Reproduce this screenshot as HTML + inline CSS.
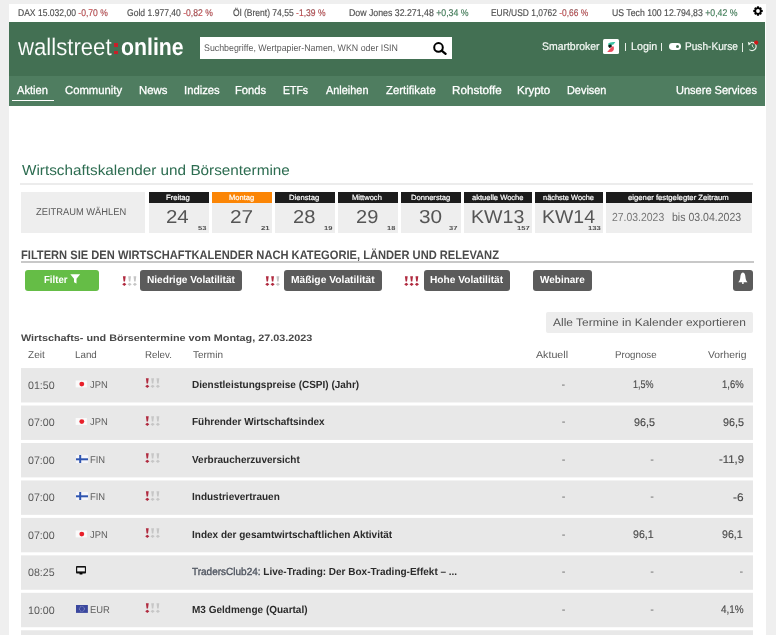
<!DOCTYPE html>
<html><head><meta charset="utf-8">
<style>
*{margin:0;padding:0;box-sizing:border-box}
html,body{width:776px;height:635px;overflow:hidden;background:#efefef;font-family:"Liberation Sans",sans-serif;text-rendering:geometricPrecision}
.a{position:absolute;white-space:nowrap;line-height:1;transform-origin:0 0}
.b{position:absolute}
.neg{color:#d0454a}.pos{color:#3d8c5c}
.box{position:absolute;background:#eeeeee;top:192px;height:40.7px}
.dhb{position:absolute;top:192px;height:10.7px;background:#1c1c1c}
.btn{position:absolute;top:270px;height:20.8px;background:#5b5b5b;border-radius:3px}
.row{position:absolute;left:21px;width:732px;height:34.6px;background:#e8e8e8}
.v{width:100px;text-align:right;font-size:11px;color:#484848;font-weight:bold}
.pipe{position:absolute;width:1px;background:#e8f0e8}
</style></head><body><div style="position:absolute;left:0;top:0;width:776px;height:635px;filter:blur(0.3px)">
<div class="b" style="left:9px;top:4px;width:757px;height:640px;background:#fff"></div>
<!-- gear -->
<svg class="b" style="left:752.9px;top:6.2px" width="10" height="10" viewBox="0 0 10 10"><g fill="#000"><circle cx="5" cy="5" r="3.4"/><rect x="3.8" y="0.2" width="2.4" height="9.6" rx="0.9"/><rect x="0.2" y="3.8" width="9.6" height="2.4" rx="0.9"/><rect x="3.8" y="0.4" width="2.4" height="9.2" rx="0.9" transform="rotate(45 5 5)"/><rect x="0.4" y="3.8" width="9.2" height="2.4" rx="0.9" transform="rotate(45 5 5)"/></g><circle cx="5" cy="5" r="1.9" fill="#fff"/></svg>
<!-- header -->
<div class="b" style="left:9px;top:22px;width:756px;height:54px;background:#437053"></div>
<div class="b" style="left:113.9px;top:43px;width:4.6px;height:3.6px;background:#c8202a"></div>
<div class="b" style="left:113.9px;top:50.6px;width:4.6px;height:3.7px;background:#c8202a"></div>
<div class="b" style="left:200px;top:37px;width:252px;height:21.8px;background:#fff"></div>
<svg class="b" style="left:433px;top:41.5px" width="14" height="13" viewBox="0 0 14 13"><circle cx="5.5" cy="5.4" r="4.3" fill="none" stroke="#000" stroke-width="2"/><line x1="8.6" y1="8.6" x2="12.6" y2="11.8" stroke="#000" stroke-width="2.3" stroke-linecap="round"/></svg>
<div class="b" style="left:603.3px;top:39px;width:15.6px;height:15.4px;background:#fff;border-radius:1.5px"></div>
<svg class="b" style="left:603.3px;top:38.9px" width="16" height="16" viewBox="0 0 16 16"><path d="M5.2 4.4 Q7 2.5 12.4 3.0 L10.2 5.7 Q7.5 5.5 5.3 6.4 Z" fill="#3cc4a4"/><path d="M5.4 6.0 Q4.7 7.9 6.6 9.1 L8.7 8.1 Q9.1 6.5 8.3 5.5 Q6.6 5.3 5.4 6.0 Z" fill="#0c1a14"/><path d="M8.4 8.3 L10.2 7.0 Q11.5 8.5 10.7 10.9 Q9.3 13.7 4.2 12.9 Q6.5 10.5 8.4 8.3 Z" fill="#ec4c5c"/></svg>
<div class="pipe" style="left:625px;top:43px;height:8px"></div>
<div class="pipe" style="left:660.5px;top:43px;height:8px"></div>
<div class="b" style="left:669.2px;top:43.2px;width:12.1px;height:6.7px;background:#fff;border-radius:3.4px"></div>
<div class="b" style="left:675.5px;top:44.8px;width:3.6px;height:3.6px;background:#437053;border-radius:50%"></div>
<div class="pipe" style="left:742px;top:43px;height:9px"></div>
<svg class="b" style="left:744px;top:36px" width="18" height="18" viewBox="0 0 18 18"><path d="M8.3 6.4 A4.1 4.1 0 1 1 5.4 13.6" fill="none" stroke="#e8f4ea" stroke-width="1.2"/><path d="M8.3 6.4 H6.6" stroke="#e8f4ea" stroke-width="1.2"/><path d="M3.8 5.8 L7.2 7.6 L4.6 9.6 Z" fill="#eef8ee"/><path d="M8.2 8.6 L8.5 10.6 L9.8 11.6" fill="none" stroke="#d8ecd8" stroke-width="1"/><circle cx="12.2" cy="6.6" r="2.1" fill="#d01818"/></svg>
<!-- nav -->
<div class="b" style="left:9px;top:76px;width:756px;height:29.6px;background:#4f7d60"></div>
<div class="b" style="left:12px;top:99.8px;width:42px;height:1.5px;background:#fff"></div>
<!-- title -->
<div class="b" style="left:20px;top:182.8px;width:733px;height:2px;background:#ececec"></div>
<div class="box" style="left:20.8px;width:124px"></div>
<div class="box" style="left:148.8px;width:60px"></div><div class="dhb" style="left:148.8px;width:60px"></div>
<div class="box" style="left:211.8px;width:60px"></div><div class="dhb" style="left:211.8px;width:60px;background:#fb8505"></div>
<div class="box" style="left:274.8px;width:60px"></div><div class="dhb" style="left:274.8px;width:60px"></div>
<div class="box" style="left:337.8px;width:60px"></div><div class="dhb" style="left:337.8px;width:60px"></div>
<div class="box" style="left:400.8px;width:60px"></div><div class="dhb" style="left:400.8px;width:60px"></div>
<div class="box" style="left:463.9px;width:68px"></div><div class="dhb" style="left:463.9px;width:68px"></div>
<div class="box" style="left:535.2px;width:68px"></div><div class="dhb" style="left:535.2px;width:68px"></div>
<div class="box" style="left:606.3px;width:145.8px"></div><div class="dhb" style="left:606.3px;width:145.8px"></div>
<!-- filter -->
<div class="b" style="left:21px;top:261px;width:732.5px;height:2px;background:#c8c8c8"></div>
<div class="btn" style="left:25px;width:73.7px;background:#65bd46"></div>
<svg class="b" style="left:70px;top:273.5px" width="11" height="10" viewBox="0 0 11 10"><path d="M0.3 0.3 H10.2 L6.5 4.8 V9.6 L4 8.3 V4.8 Z" fill="#fff"/></svg>
<div class="btn" style="left:140.2px;width:102px"></div>
<div class="btn" style="left:284px;width:97.7px"></div>
<div class="btn" style="left:423.5px;width:86.5px"></div>
<div class="btn" style="left:533.2px;width:58.6px"></div>
<div class="btn" style="left:733.2px;width:20.2px"></div>
<svg class="b" style="left:737px;top:271px" width="13" height="14" viewBox="0 0 13 14"><path d="M5.9 1.4 C7.9 1.7 8.3 4 8.5 6.5 C8.7 8.8 9.4 10 10.5 11.2 H1.3 C2.4 10 3.1 8.8 3.3 6.5 C3.5 4 3.9 1.7 5.9 1.4 Z" fill="#fff"/><circle cx="5.9" cy="12" r="1" fill="#fff"/></svg>
<svg class="b" style="left:122.1px;top:275.9px" width="15" height="10" viewBox="0 0 15 10"><path d="M0.9 0.2 H3.7 L3.0 5.6 H1.6 Z M0.2 8.3 L2.3 6.7 L4.4 8.3 L2.3 9.9 Z" fill="#b02a3f"/><path d="M6.2 0.2 H9.0 L8.3 5.6 H6.9 Z M5.5 8.3 L7.6 6.7 L9.7 8.3 L7.6 9.9 Z" fill="#c6c6c6"/><path d="M11.5 0.2 H14.3 L13.6 5.6 H12.2 Z M10.8 8.3 L12.9 6.7 L15.0 8.3 L12.9 9.9 Z" fill="#c6c6c6"/></svg><svg class="b" style="left:264.5px;top:275.9px" width="15" height="10" viewBox="0 0 15 10"><path d="M0.9 0.2 H3.7 L3.0 5.6 H1.6 Z M0.2 8.3 L2.3 6.7 L4.4 8.3 L2.3 9.9 Z" fill="#b02a3f"/><path d="M6.2 0.2 H9.0 L8.3 5.6 H6.9 Z M5.5 8.3 L7.6 6.7 L9.7 8.3 L7.6 9.9 Z" fill="#b02a3f"/><path d="M11.5 0.2 H14.3 L13.6 5.6 H12.2 Z M10.8 8.3 L12.9 6.7 L15.0 8.3 L12.9 9.9 Z" fill="#c6c6c6"/></svg><svg class="b" style="left:404px;top:275.9px" width="15" height="10" viewBox="0 0 15 10"><path d="M0.9 0.2 H3.7 L3.0 5.6 H1.6 Z M0.2 8.3 L2.3 6.7 L4.4 8.3 L2.3 9.9 Z" fill="#b02a3f"/><path d="M6.2 0.2 H9.0 L8.3 5.6 H6.9 Z M5.5 8.3 L7.6 6.7 L9.7 8.3 L7.6 9.9 Z" fill="#b02a3f"/><path d="M11.5 0.2 H14.3 L13.6 5.6 H12.2 Z M10.8 8.3 L12.9 6.7 L15.0 8.3 L12.9 9.9 Z" fill="#b02a3f"/></svg>
<!-- table -->
<div class="b" style="left:546.2px;top:312.2px;width:207px;height:20.8px;background:#ededed;border-radius:2px"></div>
<svg class="b" style="left:0;top:360px" width="776" height="275" viewBox="0 360 776 275"><rect x="21" y="368.06" width="732" height="34.4" fill="#e8e8e8"/><rect x="21" y="405.52" width="732" height="34.4" fill="#e8e8e8"/><rect x="21" y="442.98" width="732" height="34.4" fill="#e8e8e8"/><rect x="21" y="480.44" width="732" height="34.4" fill="#e8e8e8"/><rect x="21" y="517.90" width="732" height="34.4" fill="#e8e8e8"/><rect x="21" y="555.36" width="732" height="34.4" fill="#e8e8e8"/><rect x="21" y="592.82" width="732" height="34.4" fill="#e8e8e8"/><rect x="21" y="630.28" width="732" height="34.4" fill="#e8e8e8"/></svg>
<svg class="b" style="left:75px;top:380px" width="13" height="9" viewBox="0 0 13 9"><rect x="0.7" y="0.50" width="11.2" height="6.9" fill="#fafafa"/><circle cx="6.8" cy="4.10" r="2.45" fill="#e8202a"/></svg><svg class="b" style="left:75px;top:417px" width="13" height="9" viewBox="0 0 13 9"><rect x="0.7" y="1.00" width="11.2" height="6.9" fill="#fafafa"/><circle cx="6.8" cy="4.60" r="2.45" fill="#e8202a"/></svg><svg class="b" style="left:75.7px;top:454.8px" width="12.2" height="8.2" viewBox="0 0 12.2 8.2"><rect width="12.2" height="8.2" fill="#f6f6fa"/><rect x="3.2" y="0" width="2" height="8.2" fill="#2f55b0"/><rect x="0" y="3.3" width="12.2" height="2" fill="#2f55b0"/></svg><svg class="b" style="left:75.7px;top:492.3px" width="12.2" height="8.2" viewBox="0 0 12.2 8.2"><rect width="12.2" height="8.2" fill="#f6f6fa"/><rect x="3.2" y="0" width="2" height="8.2" fill="#2f55b0"/><rect x="0" y="3.3" width="12.2" height="2" fill="#2f55b0"/></svg><svg class="b" style="left:75px;top:530px" width="13" height="9" viewBox="0 0 13 9"><rect x="0.7" y="0.50" width="11.2" height="6.9" fill="#fafafa"/><circle cx="6.8" cy="4.10" r="2.45" fill="#e8202a"/></svg><svg class="b" style="left:75.8px;top:566.2px" width="10.2" height="8.6" viewBox="0 0 10.2 8.6"><rect x="0" y="0" width="10.1" height="7.4" rx="0.9" fill="#111"/><rect x="1.2" y="1.6" width="7.7" height="3.8" fill="#f0f0f0"/><rect x="3.5" y="6.8" width="3" height="1.8" rx="0.6" fill="#000"/></svg><svg class="b" style="left:76px;top:605px" width="11.9" height="7.9" viewBox="0 0 11.9 7.9"><rect width="11.9" height="7.9" fill="#3a479e"/><circle cx="5.9" cy="3.9" r="2.5" fill="none" stroke="#a6acd8" stroke-width="0.8" stroke-dasharray="0.9 0.7"/></svg>
<svg class="b" style="left:144.5px;top:378px" width="15" height="10" viewBox="0 0 15 10"><path d="M0.9 0.2 H3.7 L3.0 5.6 H1.6 Z M0.2 8.3 L2.3 6.7 L4.4 8.3 L2.3 9.9 Z" fill="#b02a3f"/><path d="M6.2 0.2 H9.0 L8.3 5.6 H6.9 Z M5.5 8.3 L7.6 6.7 L9.7 8.3 L7.6 9.9 Z" fill="#c6c6c6"/><path d="M11.5 0.2 H14.3 L13.6 5.6 H12.2 Z M10.8 8.3 L12.9 6.7 L15.0 8.3 L12.9 9.9 Z" fill="#c6c6c6"/></svg><svg class="b" style="left:144.5px;top:415.5px" width="15" height="10" viewBox="0 0 15 10"><path d="M0.9 0.2 H3.7 L3.0 5.6 H1.6 Z M0.2 8.3 L2.3 6.7 L4.4 8.3 L2.3 9.9 Z" fill="#b02a3f"/><path d="M6.2 0.2 H9.0 L8.3 5.6 H6.9 Z M5.5 8.3 L7.6 6.7 L9.7 8.3 L7.6 9.9 Z" fill="#c6c6c6"/><path d="M11.5 0.2 H14.3 L13.6 5.6 H12.2 Z M10.8 8.3 L12.9 6.7 L15.0 8.3 L12.9 9.9 Z" fill="#c6c6c6"/></svg><svg class="b" style="left:144.5px;top:453px" width="15" height="10" viewBox="0 0 15 10"><path d="M0.9 0.2 H3.7 L3.0 5.6 H1.6 Z M0.2 8.3 L2.3 6.7 L4.4 8.3 L2.3 9.9 Z" fill="#b02a3f"/><path d="M6.2 0.2 H9.0 L8.3 5.6 H6.9 Z M5.5 8.3 L7.6 6.7 L9.7 8.3 L7.6 9.9 Z" fill="#c6c6c6"/><path d="M11.5 0.2 H14.3 L13.6 5.6 H12.2 Z M10.8 8.3 L12.9 6.7 L15.0 8.3 L12.9 9.9 Z" fill="#c6c6c6"/></svg><svg class="b" style="left:144.5px;top:490.5px" width="15" height="10" viewBox="0 0 15 10"><path d="M0.9 0.2 H3.7 L3.0 5.6 H1.6 Z M0.2 8.3 L2.3 6.7 L4.4 8.3 L2.3 9.9 Z" fill="#b02a3f"/><path d="M6.2 0.2 H9.0 L8.3 5.6 H6.9 Z M5.5 8.3 L7.6 6.7 L9.7 8.3 L7.6 9.9 Z" fill="#c6c6c6"/><path d="M11.5 0.2 H14.3 L13.6 5.6 H12.2 Z M10.8 8.3 L12.9 6.7 L15.0 8.3 L12.9 9.9 Z" fill="#c6c6c6"/></svg><svg class="b" style="left:144.5px;top:528px" width="15" height="10" viewBox="0 0 15 10"><path d="M0.9 0.2 H3.7 L3.0 5.6 H1.6 Z M0.2 8.3 L2.3 6.7 L4.4 8.3 L2.3 9.9 Z" fill="#b02a3f"/><path d="M6.2 0.2 H9.0 L8.3 5.6 H6.9 Z M5.5 8.3 L7.6 6.7 L9.7 8.3 L7.6 9.9 Z" fill="#c6c6c6"/><path d="M11.5 0.2 H14.3 L13.6 5.6 H12.2 Z M10.8 8.3 L12.9 6.7 L15.0 8.3 L12.9 9.9 Z" fill="#c6c6c6"/></svg><svg class="b" style="left:144.5px;top:603px" width="15" height="10" viewBox="0 0 15 10"><path d="M0.9 0.2 H3.7 L3.0 5.6 H1.6 Z M0.2 8.3 L2.3 6.7 L4.4 8.3 L2.3 9.9 Z" fill="#b02a3f"/><path d="M6.2 0.2 H9.0 L8.3 5.6 H6.9 Z M5.5 8.3 L7.6 6.7 L9.7 8.3 L7.6 9.9 Z" fill="#c6c6c6"/><path d="M11.5 0.2 H14.3 L13.6 5.6 H12.2 Z M10.8 8.3 L12.9 6.7 L15.0 8.3 L12.9 9.9 Z" fill="#c6c6c6"/></svg>
<div class="a" id="tk1" style="left:17.60px;top:9.20px;font-size:9.8px;transform:scaleX(0.8718);color:#4e4e4e;-webkit-text-stroke:0.15px #4e4e4e;">DAX 15.032,00 <span class="neg">-0,70 %</span></div>
<div class="a" id="tk2" style="left:126.89px;top:9.20px;font-size:9.8px;transform:scaleX(0.8746);color:#4e4e4e;-webkit-text-stroke:0.15px #4e4e4e;">Gold 1.977,40 <span class="neg">-0,82 %</span></div>
<div class="a" id="tk3" style="left:232.80px;top:9.20px;font-size:9.8px;transform:scaleX(0.8708);color:#4e4e4e;-webkit-text-stroke:0.15px #4e4e4e;">Öl (Brent) 74,55 <span class="neg">-1,39 %</span></div>
<div class="a" id="tk4" style="left:348.62px;top:9.20px;font-size:9.8px;transform:scaleX(0.8943);color:#4e4e4e;-webkit-text-stroke:0.15px #4e4e4e;">Dow Jones 32.271,48 <span class="pos">+0,34 %</span></div>
<div class="a" id="tk5" style="left:491.45px;top:9.20px;font-size:9.8px;transform:scaleX(0.8588);color:#4e4e4e;-webkit-text-stroke:0.15px #4e4e4e;">EUR/USD 1,0762 <span class="neg">-0,66 %</span></div>
<div class="a" id="tk6" style="left:612.41px;top:9.20px;font-size:9.8px;transform:scaleX(0.8883);color:#4e4e4e;-webkit-text-stroke:0.15px #4e4e4e;">US Tech 100 12.794,83 <span class="pos">+0,42 %</span></div>
<div class="a" id="lg1" style="left:18.15px;top:35.50px;font-size:24px;transform:scaleX(0.9228);color:#fff;-webkit-text-stroke:0.1px #437053;">wallstreet</div>
<div class="a" id="lg2" style="left:121.10px;top:35.50px;font-size:24px;transform:scaleX(0.8862);color:#fff;font-weight:bold;">online</div>
<div class="a" id="srch" style="left:203.52px;top:44.31px;font-size:9.5px;transform:scaleX(0.9291);color:#5a5a5a;">Suchbegriffe, Wertpapier-Namen, WKN oder ISIN</div>
<div class="a" id="sb" style="left:541.58px;top:41.77px;font-size:11px;transform:scaleX(0.9498);color:#f4f8f4;-webkit-text-stroke:0.2px #f4f8f4;">Smartbroker</div>
<div class="a" id="lgn" style="left:630.60px;top:41.77px;font-size:11px;transform:scaleX(0.9759);color:#f4f8f4;-webkit-text-stroke:0.2px #f4f8f4;">Login</div>
<div class="a" id="psh" style="left:684.88px;top:41.77px;font-size:11px;transform:scaleX(0.9195);color:#f4f8f4;-webkit-text-stroke:0.2px #f4f8f4;">Push-Kurse</div>
<div class="a" id="nv0" style="left:17.41px;top:85.34px;font-size:11.6px;transform:scaleX(0.9567);color:#fff;-webkit-text-stroke:0.3px #fff;">Aktien</div>
<div class="a" id="nv1" style="left:65.29px;top:85.34px;font-size:11.6px;transform:scaleX(0.9750);color:#fff;-webkit-text-stroke:0.3px #fff;">Community</div>
<div class="a" id="nv2" style="left:138.60px;top:85.34px;font-size:11.6px;transform:scaleX(0.9781);color:#fff;-webkit-text-stroke:0.3px #fff;">News</div>
<div class="a" id="nv3" style="left:183.63px;top:85.34px;font-size:11.6px;transform:scaleX(0.9722);color:#fff;-webkit-text-stroke:0.3px #fff;">Indizes</div>
<div class="a" id="nv4" style="left:235.33px;top:85.34px;font-size:11.6px;transform:scaleX(0.9655);color:#fff;-webkit-text-stroke:0.3px #fff;">Fonds</div>
<div class="a" id="nv5" style="left:282.94px;top:85.34px;font-size:11.6px;transform:scaleX(0.9075);color:#fff;-webkit-text-stroke:0.3px #fff;">ETFs</div>
<div class="a" id="nv6" style="left:326.33px;top:85.34px;font-size:11.6px;transform:scaleX(0.9418);color:#fff;-webkit-text-stroke:0.3px #fff;">Anleihen</div>
<div class="a" id="nv7" style="left:385.93px;top:85.34px;font-size:11.6px;transform:scaleX(0.9778);color:#fff;-webkit-text-stroke:0.3px #fff;">Zertifikate</div>
<div class="a" id="nv8" style="left:451.67px;top:85.34px;font-size:11.6px;transform:scaleX(1.0051);color:#fff;-webkit-text-stroke:0.3px #fff;">Rohstoffe</div>
<div class="a" id="nv9" style="left:517.23px;top:85.34px;font-size:11.6px;transform:scaleX(0.9884);color:#fff;-webkit-text-stroke:0.3px #fff;">Krypto</div>
<div class="a" id="nv10" style="left:566.69px;top:85.34px;font-size:11.6px;transform:scaleX(0.9402);color:#fff;-webkit-text-stroke:0.3px #fff;">Devisen</div>
<div class="a" id="nv11" style="left:676.29px;top:85.34px;font-size:11.6px;transform:scaleX(0.9514);color:#fff;-webkit-text-stroke:0.3px #fff;">Unsere Services</div>
<div class="a" id="ttl" style="left:21.51px;top:163.92px;font-size:14.4px;transform:scaleX(1.0632);color:#2c6c50;">Wirtschaftskalender und Börsentermine</div>
<div class="a" id="zw" style="left:36.29px;top:207.83px;font-size:9.8px;transform:scaleX(0.9525);color:#5a5a5a;">ZEITRAUM WÄHLEN</div>
<div class="a" id="dh0" style="left:166.21px;top:193.54px;font-size:7.5px;transform:scaleX(1.0211);color:#fff;-webkit-text-stroke:0.2px #fff;">Freitag</div>
<div class="a" id="dh1" style="left:228.75px;top:193.54px;font-size:7.5px;transform:scaleX(1.0037);color:#fff;-webkit-text-stroke:0.2px #fff;">Montag</div>
<div class="a" id="dh2" style="left:289.14px;top:193.54px;font-size:7.5px;transform:scaleX(1.0176);color:#fff;-webkit-text-stroke:0.2px #fff;">Dienstag</div>
<div class="a" id="dh3" style="left:352.24px;top:193.54px;font-size:7.5px;transform:scaleX(1.0083);color:#fff;-webkit-text-stroke:0.2px #fff;">Mittwoch</div>
<div class="a" id="dh4" style="left:410.87px;top:193.54px;font-size:7.5px;transform:scaleX(1.0124);color:#fff;-webkit-text-stroke:0.2px #fff;">Donnerstag</div>
<div class="a" id="dh5" style="left:472.13px;top:193.54px;font-size:7.5px;transform:scaleX(1.0074);color:#fff;-webkit-text-stroke:0.2px #fff;">aktuelle Woche</div>
<div class="a" id="dh6" style="left:543.21px;top:193.54px;font-size:7.5px;transform:scaleX(0.9891);color:#fff;-webkit-text-stroke:0.2px #fff;">nächste Woche</div>
<div class="a" id="dh7" style="left:628.48px;top:193.54px;font-size:7.5px;transform:scaleX(1.0287);color:#fff;-webkit-text-stroke:0.2px #fff;">eigener festgelegter Zeitraum</div>
<div class="a" id="dn0" style="left:166.44px;top:207.87px;font-size:18.7px;transform:scaleX(1.0934);color:#555;">24</div>
<div class="a" id="dn1" style="left:229.57px;top:207.87px;font-size:18.7px;transform:scaleX(1.1142);color:#555;">27</div>
<div class="a" id="dn2" style="left:293.21px;top:207.87px;font-size:18.7px;transform:scaleX(1.0765);color:#555;">28</div>
<div class="a" id="dn3" style="left:356.46px;top:207.87px;font-size:18.7px;transform:scaleX(1.0711);color:#555;">29</div>
<div class="a" id="dn4" style="left:418.71px;top:207.87px;font-size:18.7px;transform:scaleX(1.1119);color:#555;">30</div>
<div class="a" id="dn5" style="left:471.41px;top:207.87px;font-size:18.7px;transform:scaleX(1.0486);color:#555;">KW13</div>
<div class="a" id="dn6" style="left:542.36px;top:207.87px;font-size:18.7px;transform:scaleX(1.0403);color:#555;">KW14</div>
<div class="a" id="ds0" style="left:197.87px;top:226.95px;font-size:5.9px;transform:scaleX(1.2874);color:#505050;font-weight:bold;">53</div>
<div class="a" id="ds1" style="left:260.56px;top:226.95px;font-size:5.9px;transform:scaleX(1.3183);color:#505050;font-weight:bold;">21</div>
<div class="a" id="ds2" style="left:323.50px;top:226.95px;font-size:5.9px;transform:scaleX(1.2882);color:#505050;font-weight:bold;">19</div>
<div class="a" id="ds3" style="left:386.61px;top:226.95px;font-size:5.9px;transform:scaleX(1.2699);color:#505050;font-weight:bold;">18</div>
<div class="a" id="ds4" style="left:449.35px;top:226.95px;font-size:5.9px;transform:scaleX(1.2947);color:#505050;font-weight:bold;">37</div>
<div class="a" id="ds5" style="left:516.69px;top:226.95px;font-size:5.9px;transform:scaleX(1.2937);color:#505050;font-weight:bold;">157</div>
<div class="a" id="ds6" style="left:588.03px;top:226.95px;font-size:5.9px;transform:scaleX(1.3039);color:#505050;font-weight:bold;">133</div>
<div class="a" id="dt1" style="left:612.28px;top:212.28px;font-size:11.7px;transform:scaleX(0.8924);color:#777;">27.03.2023</div>
<div class="a" id="dt2" style="left:672.19px;top:212.28px;font-size:11.7px;transform:scaleX(0.9028);color:#666;">bis 03.04.2023</div>
<div class="a" id="fh" style="left:20.80px;top:248.99px;font-size:12.3px;transform:scaleX(0.9051);color:#4a4a4a;font-weight:bold;">FILTERN SIE DEN WIRTSCHAFTKALENDER NACH KATEGORIE, LÄNDER UND RELEVANZ</div>
<div class="a" id="b1" style="left:43.66px;top:276.44px;font-size:10.3px;transform:scaleX(0.9322);color:#fff;font-weight:bold;">Filter</div>
<div class="a" id="b2" style="left:147.37px;top:276.44px;font-size:10.3px;transform:scaleX(0.9814);color:#fff;font-weight:bold;">Niedrige Volatilität</div>
<div class="a" id="b3" style="left:290.91px;top:276.44px;font-size:10.3px;transform:scaleX(0.9961);color:#fff;font-weight:bold;">Mäßige Volatilität</div>
<div class="a" id="b4" style="left:430.42px;top:276.44px;font-size:10.3px;transform:scaleX(0.9859);color:#fff;font-weight:bold;">Hohe Volatilität</div>
<div class="a" id="b5" style="left:540.29px;top:276.44px;font-size:10.3px;transform:scaleX(0.9689);color:#fff;font-weight:bold;">Webinare</div>
<div class="a" id="exp" style="left:553.14px;top:317.78px;font-size:10.9px;transform:scaleX(1.1000);color:#555;">Alle Termine in Kalender exportieren</div>
<div class="a" id="sub" style="left:21.07px;top:333.51px;font-size:9.3px;transform:scaleX(1.1632);color:#484848;font-weight:bold;">Wirtschafts- und Börsentermine vom Montag, 27.03.2023</div>
<div class="a" id="ch0" style="left:28.46px;top:350.97px;font-size:10px;transform:scaleX(1.0029);color:#5a5a5a;">Zeit</div>
<div class="a" id="ch1" style="left:75.41px;top:350.97px;font-size:10px;transform:scaleX(0.9790);color:#5a5a5a;">Land</div>
<div class="a" id="ch2" style="left:144.52px;top:350.97px;font-size:10px;transform:scaleX(0.9728);color:#5a5a5a;">Relev.</div>
<div class="a" id="ch3" style="left:192.62px;top:350.97px;font-size:10px;transform:scaleX(0.9974);color:#5a5a5a;">Termin</div>
<div class="a" id="ch4" style="left:536.42px;top:350.97px;font-size:10px;transform:scaleX(1.0671);color:#5a5a5a;">Aktuell</div>
<div class="a" id="ch5" style="left:614.53px;top:350.97px;font-size:10px;transform:scaleX(0.9700);color:#5a5a5a;">Prognose</div>
<div class="a" id="ch6" style="left:707.74px;top:350.97px;font-size:10px;transform:scaleX(1.0306);color:#5a5a5a;">Vorherig</div>
<div class="a" id="rt0" style="left:27.65px;top:380.80px;font-size:10.9px;transform:scaleX(0.9785);color:#5a5a5a;">01:50</div>
<div class="a" id="rc0" style="left:90.03px;top:380.89px;font-size:9.8px;transform:scaleX(0.9585);color:#606060;">JPN</div>
<div class="a" id="rn0" style="left:191.78px;top:380.97px;font-size:10.3px;transform:scaleX(0.9708);color:#2b2b2b;font-weight:bold;">Dienstleistungspreise (CSPI) (Jahr)</div>
<div class="a" id="rt1" style="left:27.65px;top:418.26px;font-size:10.9px;transform:scaleX(0.9785);color:#5a5a5a;">07:00</div>
<div class="a" id="rc1" style="left:90.03px;top:418.35px;font-size:9.8px;transform:scaleX(0.9585);color:#606060;">JPN</div>
<div class="a" id="rn1" style="left:191.78px;top:418.43px;font-size:10.3px;transform:scaleX(0.9708);color:#2b2b2b;font-weight:bold;">Führender Wirtschaftsindex</div>
<div class="a" id="rt2" style="left:27.65px;top:455.72px;font-size:10.9px;transform:scaleX(0.9785);color:#5a5a5a;">07:00</div>
<div class="a" id="rc2" style="left:90.03px;top:455.81px;font-size:9.8px;transform:scaleX(0.9585);color:#606060;">FIN</div>
<div class="a" id="rn2" style="left:191.78px;top:455.89px;font-size:10.3px;transform:scaleX(0.9708);color:#2b2b2b;font-weight:bold;">Verbraucherzuversicht</div>
<div class="a" id="rt3" style="left:27.65px;top:493.18px;font-size:10.9px;transform:scaleX(0.9785);color:#5a5a5a;">07:00</div>
<div class="a" id="rc3" style="left:90.03px;top:493.27px;font-size:9.8px;transform:scaleX(0.9585);color:#606060;">FIN</div>
<div class="a" id="rn3" style="left:191.78px;top:493.35px;font-size:10.3px;transform:scaleX(0.9708);color:#2b2b2b;font-weight:bold;">Industrievertrauen</div>
<div class="a" id="rt4" style="left:27.65px;top:530.64px;font-size:10.9px;transform:scaleX(0.9785);color:#5a5a5a;">07:00</div>
<div class="a" id="rc4" style="left:90.03px;top:530.73px;font-size:9.8px;transform:scaleX(0.9585);color:#606060;">JPN</div>
<div class="a" id="rn4" style="left:191.78px;top:530.81px;font-size:10.3px;transform:scaleX(0.9708);color:#2b2b2b;font-weight:bold;">Index der gesamtwirtschaftlichen Aktivität</div>
<div class="a" id="rt5" style="left:27.65px;top:568.10px;font-size:10.9px;transform:scaleX(0.9785);color:#5a5a5a;">08:25</div>
<div class="a" id="rn5" style="left:191.78px;top:568.27px;font-size:10.3px;transform:scaleX(0.9708);color:#2b2b2b;font-weight:bold;"><span style="color:#4f5560;font-weight:normal;-webkit-text-stroke:0.35px #4f5560">TradersClub24:</span> Live-Trading: Der Box-Trading-Effekt – ...</div>
<div class="a" id="rt6" style="left:27.65px;top:605.56px;font-size:10.9px;transform:scaleX(0.9785);color:#5a5a5a;">10:00</div>
<div class="a" id="rc6" style="left:90.03px;top:605.65px;font-size:9.8px;transform:scaleX(0.9585);color:#606060;">EUR</div>
<div class="a" id="rn6" style="left:191.78px;top:605.73px;font-size:10.3px;transform:scaleX(0.9708);color:#2b2b2b;font-weight:bold;">M3 Geldmenge (Quartal)</div>
<div class="a" id="v00" style="left:561.53px;top:379.75px;font-size:11px;color:#6a6a6a;">-</div>
<div class="a" id="v01" style="left:632.71px;top:380.09px;font-size:11px;transform:scaleX(0.8161);color:#4a4a4a;-webkit-text-stroke:0.15px #4a4a4a;">1,5%</div>
<div class="a" id="v02" style="left:721.66px;top:380.31px;font-size:11px;transform:scaleX(0.8595);color:#4a4a4a;-webkit-text-stroke:0.15px #4a4a4a;">1,6%</div>
<div class="a" id="v10" style="left:561.69px;top:416.60px;font-size:11px;color:#6a6a6a;">-</div>
<div class="a" id="v11" style="left:633.67px;top:418.32px;font-size:11px;transform:scaleX(0.9772);color:#4a4a4a;-webkit-text-stroke:0.15px #4a4a4a;">96,5</div>
<div class="a" id="v12" style="left:722.84px;top:418.32px;font-size:11px;transform:scaleX(0.9772);color:#4a4a4a;-webkit-text-stroke:0.15px #4a4a4a;">96,5</div>
<div class="a" id="v20" style="left:561.69px;top:454.89px;font-size:11px;color:#6a6a6a;">-</div>
<div class="a" id="v21" style="left:650.18px;top:454.81px;font-size:11px;color:#6a6a6a;">-</div>
<div class="a" id="v22" style="left:718.66px;top:455.23px;font-size:11px;transform:scaleX(1.0304);color:#4a4a4a;-webkit-text-stroke:0.15px #4a4a4a;">-11,9</div>
<div class="a" id="v30" style="left:561.69px;top:492.48px;font-size:11px;color:#6a6a6a;">-</div>
<div class="a" id="v31" style="left:650.18px;top:492.30px;font-size:11px;color:#6a6a6a;">-</div>
<div class="a" id="v32" style="left:732.81px;top:492.53px;font-size:11px;transform:scaleX(1.0750);color:#4a4a4a;-webkit-text-stroke:0.15px #4a4a4a;">-6</div>
<div class="a" id="v40" style="left:561.69px;top:529.77px;font-size:11px;color:#6a6a6a;">-</div>
<div class="a" id="v41" style="left:633.03px;top:529.52px;font-size:11px;transform:scaleX(0.9641);color:#4a4a4a;-webkit-text-stroke:0.15px #4a4a4a;">96,1</div>
<div class="a" id="v42" style="left:722.21px;top:529.52px;font-size:11px;transform:scaleX(0.9641);color:#4a4a4a;-webkit-text-stroke:0.15px #4a4a4a;">96,1</div>
<div class="a" id="v50" style="left:561.69px;top:567.36px;font-size:11px;color:#6a6a6a;">-</div>
<div class="a" id="v51" style="left:650.18px;top:567.20px;font-size:11px;color:#6a6a6a;">-</div>
<div class="a" id="v52" style="left:739.42px;top:567.28px;font-size:11px;color:#6a6a6a;">-</div>
<div class="a" id="v60" style="left:561.69px;top:604.67px;font-size:11px;color:#6a6a6a;">-</div>
<div class="a" id="v61" style="left:650.18px;top:604.59px;font-size:11px;color:#6a6a6a;">-</div>
<div class="a" id="v62" style="left:720.62px;top:604.80px;font-size:11px;transform:scaleX(0.9032);color:#4a4a4a;-webkit-text-stroke:0.15px #4a4a4a;">4,1%</div>
</div></body></html>
